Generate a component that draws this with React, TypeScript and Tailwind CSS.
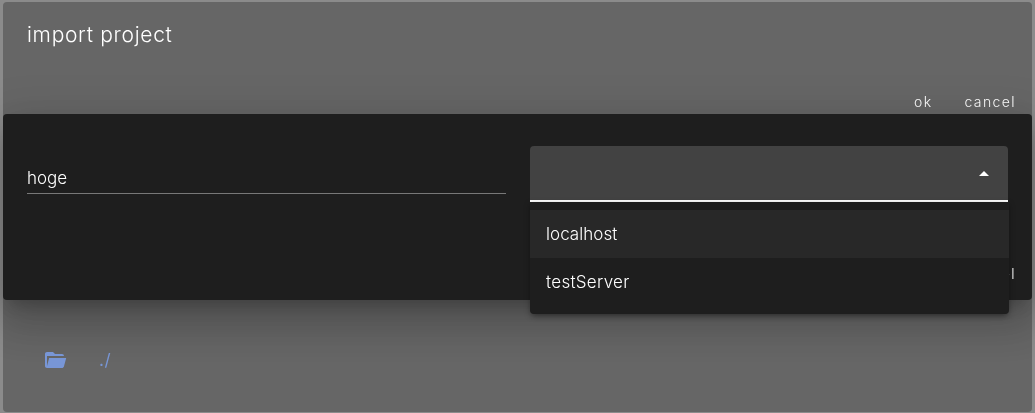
const fontStack = "font-['Inter','Liberation_Sans',sans-serif]";

function FolderOpenIcon() {
  return (
    <svg viewBox="0 0 24 24" className="size-6 fill-[#7896d6]" aria-hidden="true">
      <path d="M19,20H4C2.89,20 2,19.1 2,18V6C2,4.89 2.89,4 4,4H10L12,6H19A2,2 0 0,1 21,8H21L4,8V18L6.14,10H23.21L20.93,18.5C20.7,19.37 19.92,20 19,20Z" />
    </svg>
  );
}

function Actions({ className }: { className: string }) {
  return (
    <div className={`flex justify-end gap-8 text-sm leading-5 font-light tracking-[1.4px] ${className}`}>
      <button>ok</button>
      <button>cancel</button>
    </div>
  );
}

function HostSelect() {
  return (
    <div className="relative h-14 w-[478px]">
      <div className="flex h-14 items-start justify-end rounded-t border-b-2 border-white bg-[#424242] pt-[15px] pr-3">
        <svg viewBox="0 0 24 24" className="size-6 fill-white" aria-hidden="true">
          <path d="M7,15L12,10L17,15H7Z" />
        </svg>
      </div>
      <ul className="absolute top-14 left-0 z-10 w-[479px] rounded-b bg-[#1e1e1e] py-2 text-[17px] leading-6 font-light shadow-[0_5px_5px_-3px_rgba(0,0,0,0.2),0_2px_6px_0_rgba(0,0,0,0.3)]">
        <li className="flex h-12 items-center bg-[#282828] px-4"><span className="tracking-[0.05px]">localhost</span></li>
        <li className="flex h-12 items-center px-4"><span className="tracking-[0.3px]">testServer</span></li>
      </ul>
    </div>
  );
}

export default function App() {
  return (
    <div className={`h-[413px] w-[1035px] overflow-hidden bg-[#8b8b8b] px-[3px] pt-0.5 pb-px text-white antialiased ${fontStack}`}>
      <main className="flex h-[410px] flex-col rounded bg-[#666666] will-change-transform">
        <header className="h-28">
          <h1 className="pt-[17px] pl-6 text-[21px] leading-8 font-light tracking-[0.7px]">import project</h1>
          <Actions className="pt-[41px] pr-4" />
        </header>
        <section className="h-[186px] rounded bg-[#1e1e1e] pt-8 shadow-[0_11px_15px_-7px_rgba(0,0,0,0.2),0_24px_38px_3px_rgba(0,0,0,0.14),0_9px_46px_8px_rgba(0,0,0,0.12)]">
          <div className="flex gap-6 px-6">
            <div className="w-[479px] pt-4">
              <div className="h-8 border-b border-[#787878] text-[17px] leading-[33px] font-light">hoge</div>
            </div>
            <HostSelect />
          </div>
          <Actions className="pt-[62px] pr-4" />
        </section>
        <div className="flex items-center gap-8 pt-12 pl-10 text-[#7896d6]">
          <FolderOpenIcon />
          <span className="text-[17px] leading-6 font-normal tracking-[0.5px]">./</span>
        </div>
      </main>
    </div>
  );
}
